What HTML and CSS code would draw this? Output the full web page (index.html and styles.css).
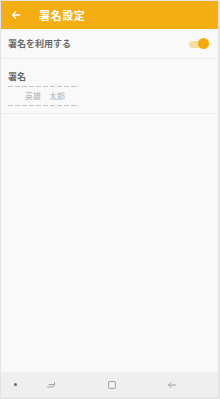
FILE: index.html
```html
<!DOCTYPE html>
<html lang="ja">
<head>
<meta charset="utf-8">
<link rel="stylesheet" href="styles.css">
</head>
<body>
<div class="frame">
  <header class="appbar">
    <svg class="back" width="10" height="10" viewBox="0 0 10 10"><path d="M9 5H1.5M5 1.5L1.5 5L5 8.5" fill="none" stroke="#fff" stroke-width="1.4"/></svg>
    <span class="title">署名設定</span>
  </header>
  <div class="row toggle-row">
    <span class="label">署名を利用する</span>
    <span class="switch"><span class="track"></span><span class="knob"></span></span>
  </div>
  <section class="sig">
    <div class="label">署名</div>
    <div class="dash"></div>
    <div class="name">英雄　太郎</div>
    <div class="dash"></div>
  </section>
  <div class="spacer"></div>
  <nav class="navbar">
    <span class="dot"></span>
    <svg class="nav-recent" width="10" height="10" viewBox="0 0 10 10"><path d="M2.5 4.5H8.5V2M1 7H7L8.5 5" fill="none" stroke="#999" stroke-width="0.9"/></svg>
    <svg class="nav-home" width="10" height="10" viewBox="0 0 10 10"><rect x="1.5" y="1.5" width="7" height="7" rx="1.5" fill="none" stroke="#999" stroke-width="0.9"/></svg>
    <svg class="nav-back" width="10" height="10" viewBox="0 0 10 10"><path d="M9 5H1.5M4.5 2L1.5 5L4.5 8" fill="none" stroke="#999" stroke-width="0.9"/></svg>
  </nav>
</div>
</body>
</html>
```
FILE: styles.css
```css
html, body { margin: 0; padding: 0; }
body { width: 220px; height: 399px; background: #e4e4e4; font-family: "Noto Sans CJK JP", "Noto Sans", sans-serif; }
.frame { box-sizing: border-box; width: 220px; height: 399px; padding: 1px 2px 2px 1px; display: flex; flex-direction: column; }
.appbar { flex: 0 0 28px; background: #f5ad14; display: flex; align-items: center; }
.back { margin-left: 10px; }
.title { color: #fff; font-size: 11px; font-weight: bold; margin-left: 18px; letter-spacing: 0.6px; }
.row { background: #f9f9f9; }
.toggle-row { height: 29px; display: flex; align-items: center; justify-content: space-between; padding: 0 9px 0 7px; border-bottom: 1px solid #ececec; }
.label { font-size: 9px; font-weight: bold; color: #6a6a6a; }
.switch { position: relative; width: 20px; height: 12px; }
.track { position: absolute; left: 0; top: 3px; width: 18px; height: 7px; border-radius: 4px; background: #f7dd9c; }
.knob { position: absolute; right: 0; top: 0; width: 11px; height: 11px; border-radius: 50%; background: #f4a90c; }
.sig { background: #f9f9f9; padding: 11px 7px 7px 7px; border-bottom: 1px solid #ececec; }
.sig .label { margin-bottom: 3px; }
.dash { width: 71px; height: 1px; background: repeating-linear-gradient(90deg, #c4c4c4 0 5px, transparent 5px 7px); }
.name { font-size: 8px; color: #b0b0b0; padding: 4px 0 4px 17px; line-height: 10px; }
.spacer { flex: 1; background: #f9f9f9; }
.navbar { flex: 0 0 25px; background: #efefef; display: flex; align-items: center; }
.dot { width: 3px; height: 3px; border-radius: 50%; background: #666; margin-left: 13px; }
.nav-recent { margin-left: 29px; }
.nav-home { margin-left: 51px; }
.nav-back { margin-left: 50px; }
```
